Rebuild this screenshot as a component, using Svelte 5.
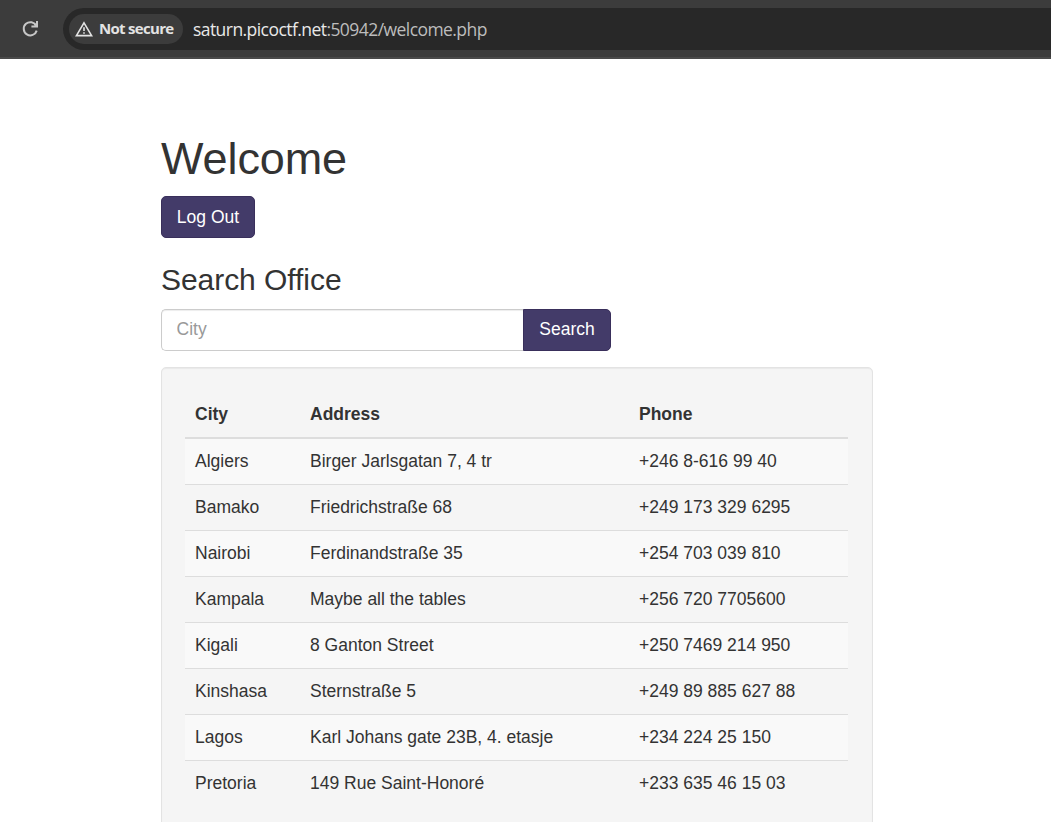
<script>
  const offices = [
    ['Algiers', 'Birger Jarlsgatan 7, 4 tr', '+246 8-616 99 40'],
    ['Bamako', 'Friedrichstraße 68', '+249 173 329 6295'],
    ['Nairobi', 'Ferdinandstraße 35', '+254 703 039 810'],
    ['Kampala', 'Maybe all the tables', '+256 720 7705600'],
    ['Kigali', '8 Ganton Street', '+250 7469 214 950'],
    ['Kinshasa', 'Sternstraße 5', '+249 89 885 627 88'],
    ['Lagos', 'Karl Johans gate 23B, 4. etasje', '+234 224 25 150'],
    ['Pretoria', '149 Rue Saint-Honoré', '+233 635 46 15 03']
  ];
</script>

<div class="window">
  <header class="toolbar">
    <svg class="reload" width="18" height="18" viewBox="0 0 18 18" fill="none" stroke="#c7c7c7" stroke-width="2">
      <path d="M14.3 5.9A6.6 6.6 0 1 0 14.7 10.6" />
      <path d="M15 1V6.6H9.4M14.8 6.4L12.6 3.8" />
    </svg>
    <div class="omnibox">
      <div class="chip">
        <svg width="18" height="16" viewBox="0 0 18 16">
          <path d="M9 1.8L16.6 14.6H1.4Z" fill="none" stroke="#e3e3e3" stroke-width="1.6" />
          <path d="M8.2 6.3h1.6v3.6H8.2zM8.2 11.2h1.6v1.6H8.2z" fill="#e3e3e3" />
        </svg>
        <span class="insecure">Not secure</span>
      </div>
      <div class="url"><span class="host">saturn.picoctf.net</span><span class="path">:50942/welcome.php</span></div>
    </div>
  </header>
  <main>
    <h1>Welcome</h1>
    <button class="btn logout">Log Out</button>
    <h3>Search Office</h3>
    <div class="search">
      <input type="text" placeholder="City" />
      <button class="btn">Search</button>
    </div>
    <section class="well">
      <table>
        <colgroup><col class="c1" /><col class="c2" /><col /></colgroup>
        <thead>
          <tr><th>City</th><th>Address</th><th>Phone</th></tr>
        </thead>
        <tbody>
          {#each offices as office}
            <tr>{#each office as cell}<td>{cell}</td>{/each}</tr>
          {/each}
        </tbody>
      </table>
    </section>
  </main>
</div>

<style>
  :global(body) { margin: 0; background: #fff; overflow: hidden; }
  .window {
    height: 822px;
    overflow: hidden;
    font: 17.5px/25px 'Liberation Sans', Arial, sans-serif;
    color: #333;
  }
  .toolbar {
    box-sizing: border-box;
    height: 59px;
    padding: 8px 0 0 22px;
    display: flex;
    background: #3c3c3c;
    border-bottom: 2px solid #4a4a4a;
  }
  .reload { margin: 12px 23px 0 0; flex: none; }
  .omnibox {
    box-sizing: border-box;
    flex: 1;
    height: 42px;
    padding-left: 6px;
    display: flex;
    align-items: center;
    background: #282828;
    border-radius: 21px 0 0 21px;
    font-family: 'Open Sans', 'Noto Sans', sans-serif;
  }
  .chip {
    box-sizing: border-box;
    width: 114px;
    height: 30px;
    padding-left: 6px;
    display: flex;
    align-items: center;
    background: #3c3c3c;
    border-radius: 15px;
  }
  .chip svg { flex: none; }
  .insecure {
    margin-left: 6px;
    padding-bottom: 2px;
    font-size: 15px;
    font-weight: 700;
    letter-spacing: -0.7px;
    color: #e3e3e3;
    white-space: nowrap;
  }
  .url { margin-left: 10px; font-size: 17.5px; letter-spacing: -0.56px; white-space: nowrap; }
  .host { color: #e8e8e8; }
  .path { color: #bdbdbd; }
  main { width: 712px; margin-left: 161px; padding-top: 75px; }
  h1, h3 { margin: 0; font-weight: 400; }
  h1 { font-size: 45px; height: 62px; line-height: 50px; letter-spacing: -0.1px; }
  h3 { font-size: 30px; line-height: 33px; height: 46px; margin-top: 25px; letter-spacing: -0.05px; }
  .btn {
    box-sizing: border-box;
    height: 42px;
    width: 88px;
    padding: 0;
    border: 1px solid #392f5b;
    border-radius: 5px;
    background: #433b69;
    color: #fff;
    font: 17.5px/25px 'Liberation Sans', Arial, sans-serif;
  }
  .logout { display: block; width: 94px; }
  .search { display: flex; width: 450px; height: 42px; }
  .search .btn { border-radius: 0 5px 5px 0; padding-bottom: 2px; }
  input {
    box-sizing: border-box;
    flex: 1;
    min-width: 0;
    height: 42px;
    padding: 0 15px 2px 14.5px;
    border: 1px solid #ccc;
    border-right: 0;
    border-radius: 5px 0 0 5px;
    box-shadow: inset 0 1px 1px rgba(0, 0, 0, .075);
    background: #fff;
    font: 17.5px/25px 'Liberation Sans', Arial, sans-serif;
  }
  input::placeholder { color: #999; opacity: 1; }
  .well {
    box-sizing: border-box;
    height: 500px;
    margin-top: 16px;
    padding: 23px;
    border: 1px solid #e3e3e3;
    border-radius: 5px;
    background: #f5f5f5;
    box-shadow: inset 0 1px 1px rgba(0, 0, 0, .05);
  }
  table { width: 663px; table-layout: fixed; border-collapse: separate; border-spacing: 0; }
  .c1 { width: 115px; }
  .c2 { width: 329px; }
  th, td { box-sizing: border-box; height: 46px; padding: 0 10px; text-align: left; vertical-align: middle; white-space: nowrap; }
  th { height: 48px; border-bottom: 2px solid #ddd; font-weight: 700; }
  td { border-top: 1px solid #ddd; padding-bottom: 1px; }
  tbody tr:first-child td { height: 45px; border-top: 0; }
  tbody tr:nth-child(odd) { background: #f9f9f9; }
</style>
